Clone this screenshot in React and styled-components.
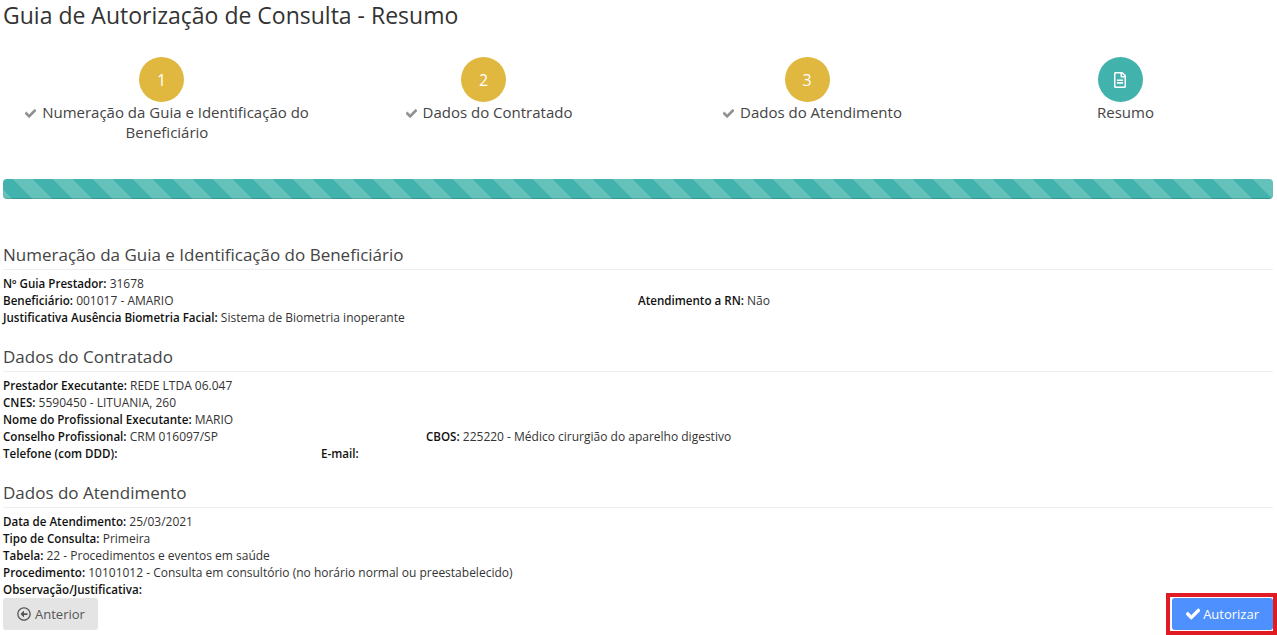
import React from "react";
import styled, { createGlobalStyle } from "styled-components";
import { FaCheck, FaRegFileAlt, FaRegArrowAltCircleLeft } from "react-icons/fa";

const GlobalStyle = createGlobalStyle`
  html, body {
    margin: 0;
    padding: 0;
    background: #fff;
    overflow: hidden;
  }
  body {
    font-family: "Open Sans", "Liberation Sans", sans-serif;
    color: #333;
  }
`;

const Page = styled.div`
  width: 1277px;
  height: 635px;
  box-sizing: border-box;
  padding: 0 4px 0 3px;
  display: flex;
  flex-direction: column;
`;

const Title = styled.h1`
  margin: 0;
  font-size: 23px;
  line-height: 30px;
  font-weight: 400;
  color: #333;
`;

const Steps = styled.div`
  display: grid;
  grid-template-columns: 328px 316px 331px 295px;
  margin-top: 27px;
  height: 122px;
`;

const Step = styled.div`
  display: flex;
  flex-direction: column;
  align-items: center;
`;

const Circle = styled.div`
  width: 45px;
  height: 45px;
  border-radius: 50%;
  margin-right: 11px;
  background: ${(p) => (p.$active ? "#41b3ac" : "#e0b73f")};
  color: #fff;
  font-size: 16px;
  display: flex;
  align-items: center;
  justify-content: center;
`;

const StepLabel = styled.div`
  padding: 0 16px;
  font-size: 15px;
  line-height: 20px;
  text-align: center;
  color: #444;

  svg {
    font-size: 11px;
    color: #8f8f8f;
    margin-right: 6px;
    vertical-align: -1px;
    stroke-width: 30;
  }
`;

const Progress = styled.div`
  height: 20px;
  border-radius: 4px;
  background-color: #41b3ac;
  background-image: linear-gradient(
    45deg,
    #64c2ba 25%,
    transparent 25%,
    transparent 50%,
    #64c2ba 50%,
    #64c2ba 75%,
    transparent 75%,
    transparent
  );
  background-size: 40px 40px;
  background-position: 10px 0;
  box-shadow: inset 0 -1px 0 rgba(0, 0, 0, 0.15);
`;

const Section = styled.section`
  margin-top: ${(p) => p.$top || 0}px;
`;

const SectionTitle = styled.h2`
  margin: 0 0 5px;
  padding-bottom: 3px;
  font-size: 17px;
  line-height: 23px;
  font-weight: 400;
  color: #444;
  border-bottom: 1px solid #eee;
`;

const Line = styled.div`
  font-size: 12px;
  line-height: 17px;
  height: 17px;
  color: #333;
  display: ${(p) => (p.$cols ? "grid" : "block")};
  grid-template-columns: ${(p) => p.$cols || "none"};
`;

const Label = styled.b`
  font-size: 11.6px;
  font-weight: 600;
  color: #111;
`;

const Footer = styled.div`
  margin-top: auto;
  padding-bottom: 5px;
  display: flex;
  justify-content: space-between;
`;

const Button = styled.button`
  height: 32px;
  border: 0;
  border-radius: 3px;
  font-family: inherit;
  font-size: 13px;
  display: inline-flex;
  align-items: center;
  gap: ${(p) => (p.$primary ? 3 : 4)}px;
  background: ${(p) => (p.$primary ? "#4d90fe" : "#e4e4e4")};
  color: ${(p) => (p.$primary ? "#fff" : "#555")};
  padding: 0 ${(p) => (p.$primary ? 14 : 13)}px 0 14px;

  svg {
    font-size: 14px;
    stroke-width: ${(p) => (p.$primary ? 30 : 0)};
  }
`;

const Highlight = styled.span`
  position: relative;
  display: inline-flex;

  &::after {
    content: "";
    position: absolute;
    inset: -5px -4px -5px -6px;
    border: 4px solid #e01b24;
    pointer-events: none;
  }
`;

const Entry = ({ label, children }) => (
  <span>
    <Label>{label}:</Label> {children}
  </span>
);

const stepList = [
  { n: "1", text: "Numeração da Guia e Identificação do Beneficiário" },
  { n: "2", text: "Dados do Contratado" },
  { n: "3", text: "Dados do Atendimento" },
];

export default function App() {
  return (
    <Page>
      <GlobalStyle />
      <Title>Guia de Autorização de Consulta - Resumo</Title>

      <Steps>
        {stepList.map((s) => (
          <Step key={s.n}>
            <Circle>{s.n}</Circle>
            <StepLabel>
              <FaCheck />
              {s.text}
            </StepLabel>
          </Step>
        ))}
        <Step>
          <Circle $active>
            <FaRegFileAlt />
          </Circle>
          <StepLabel>Resumo</StepLabel>
        </Step>
      </Steps>

      <Progress />

      <Section $top={44}>
        <SectionTitle>Numeração da Guia e Identificação do Beneficiário</SectionTitle>
        <Line>
          <Entry label="Nº Guia Prestador">31678</Entry>
        </Line>
        <Line $cols="635px 1fr">
          <Entry label="Beneficiário">001017 - AMARIO</Entry>
          <Entry label="Atendimento a RN">Não</Entry>
        </Line>
        <Line>
          <Entry label="Justificativa Ausência Biometria Facial">Sistema de Biometria inoperante</Entry>
        </Line>
      </Section>

      <Section $top={19}>
        <SectionTitle>Dados do Contratado</SectionTitle>
        <Line>
          <Entry label="Prestador Executante">REDE LTDA 06.047</Entry>
        </Line>
        <Line>
          <Entry label="CNES">5590450 - LITUANIA, 260</Entry>
        </Line>
        <Line>
          <Entry label="Nome do Profissional Executante">MARIO</Entry>
        </Line>
        <Line $cols="423px 1fr">
          <Entry label="Conselho Profissional">CRM 016097/SP</Entry>
          <Entry label="CBOS">225220 - Médico cirurgião do aparelho digestivo</Entry>
        </Line>
        <Line $cols="318px 1fr">
          <Entry label="Telefone (com DDD)"></Entry>
          <Entry label="E-mail"></Entry>
        </Line>
      </Section>

      <Section $top={19}>
        <SectionTitle>Dados do Atendimento</SectionTitle>
        <Line>
          <Entry label="Data de Atendimento">25/03/2021</Entry>
        </Line>
        <Line>
          <Entry label="Tipo de Consulta">Primeira</Entry>
        </Line>
        <Line>
          <Entry label="Tabela">22 - Procedimentos e eventos em saúde</Entry>
        </Line>
        <Line>
          <Entry label="Procedimento">10101012 - Consulta em consultório (no horário normal ou preestabelecido)</Entry>
        </Line>
        <Line>
          <Entry label="Observação/Justificativa"></Entry>
        </Line>
      </Section>

      <Footer>
        <Button>
          <FaRegArrowAltCircleLeft />
          Anterior
        </Button>
        <Highlight>
          <Button $primary>
            <FaCheck />
            Autorizar
          </Button>
        </Highlight>
      </Footer>
    </Page>
  );
}
